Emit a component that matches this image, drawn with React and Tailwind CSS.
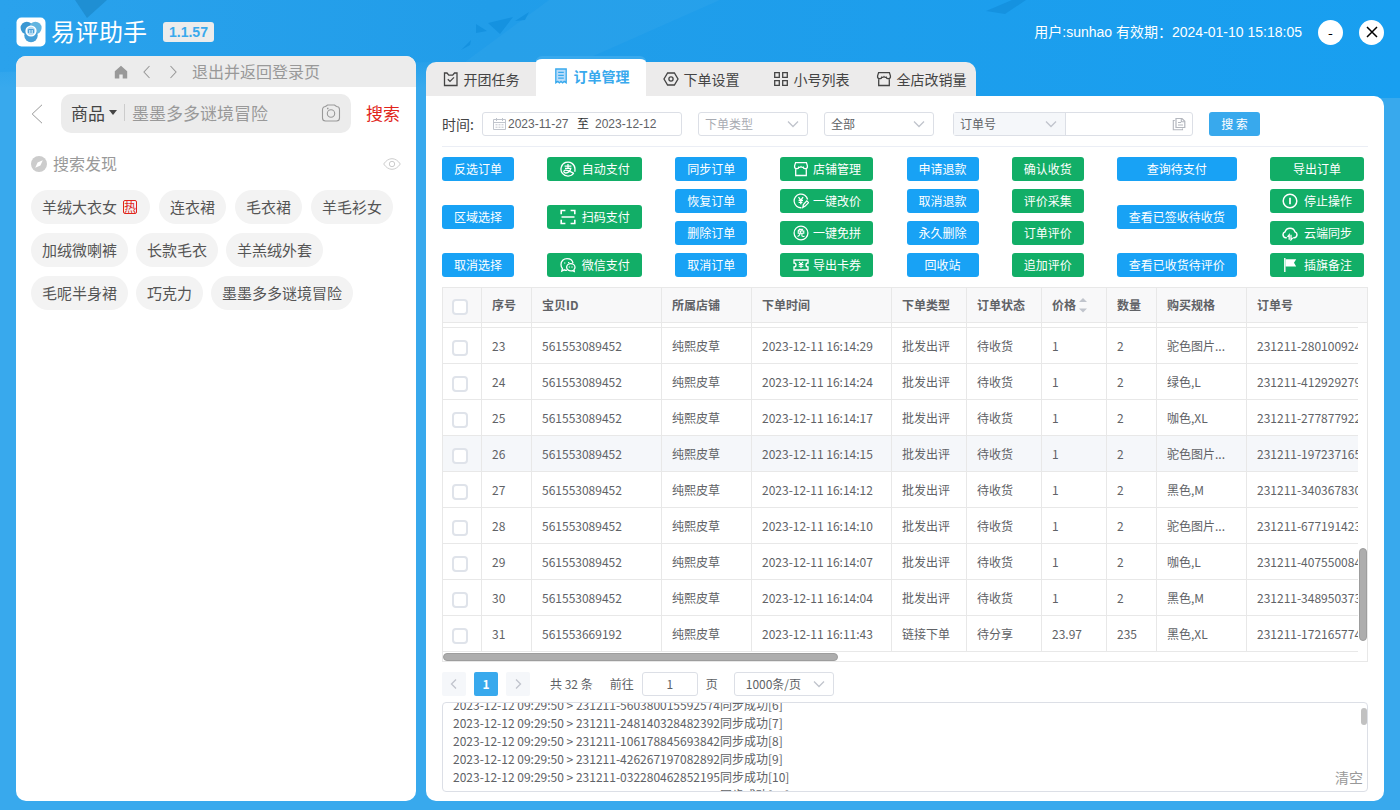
import React from "react";

const SANS = "font-['Noto_Sans_CJK_SC',sans-serif]";
const ARIAL = "font-['Liberation_Sans','Noto_Sans_CJK_SC',sans-serif]";

function Svg({ className = "size-4", children, box = "0 0 16 16" }) {
  return (
    <svg
      viewBox={box}
      className={`shrink-0 ${className}`}
      fill="none"
      stroke="currentColor"
      strokeWidth="1.3"
      aria-hidden="true"
    >
      {children}
    </svg>
  );
}

const icons = {
  task: (
    <>
      <path d="M1.500 2v12.500h12.500V2H11.500L9.700 4.200H5.800L4 2z" />
      <path d="M4.800 8.200l2.200 2.200 4-4" />
    </>
  ),
  order: (
    <>
      <path d="M2.800 1h10.400v13.800l-2-1.400-1.600 1.400L8 13.400l-1.600 1.400-1.600-1.400-2 1.400z" fill="#b9dcfa" />
      <path d="M5.200 4.400h5.600M5.200 7.300h5.600M5.200 10.200h5.600" />
    </>
  ),
  hex: (
    <>
      <path d="M4.600 2h6.800L15 8l-3.600 6H4.600L1 8z" />
      <circle cx="8" cy="8" r="2.100" />
    </>
  ),
  grid: (
    <path d="M1.700 1.700h4.600v4.600H1.700zM9.700 1.700h4.600v4.600H9.700zM1.700 9.700h4.600v4.600H1.700zM9.700 9.700h4.600v4.600H9.700z" />
  ),
  shop: (
    <path d="M2.700 7v7.500h10.600V7M2.600 1.600h10.800l1 3.200v1.400a2 2 0 0 1-2.100 1.400 2 2 0 0 1-2.100-1.400A2 2 0 0 1 8 5.600a2 2 0 0 1-2.200.6 2 2 0 0 1-2.100 1.400 2 2 0 0 1-2.100-1.400V4.800z" />
  ),
  alipay: (
    <>
      <path d="M13.800 12A7 7 0 1 1 15 8c0 1 0 1.800-.3 2.800" />
      <path d="M4.600 5.200h6.800M8 3v4.400M5 7.400h5.800c-.6 2.600-2.800 4.600-5 4.600-2.600 0-2.600-2.800-.2-2.800 2.200 0 5 1.600 8 3" />
    </>
  ),
  scan: (
    <path d="M1.200 5.200V1.500h4.200M10.600 1.500h4.200v3.700M1.200 10.800v3.700h4.200M10.600 14.500h4.200v-3.700M1.500 8h13" strokeWidth="1.600" />
  ),
  wechat: (
    <>
      <path d="M7 13.200c-1 .2-2 0-2.800-.4L1.800 14l.6-2.600A6 6 0 0 1 1 7.400C1 4 3.600 1.600 7 1.600c3.200 0 5.600 1.800 6 4.600" />
      <path d="M10.800 6.600c2.400 0 4.200 1.600 4.200 3.600 0 1-.4 1.800-1 2.400l.3 1.800-1.800-.8c-3.400.8-5.900-1-5.900-3.400 0-2 1.800-3.600 4.200-3.600z" />
      <path d="M4.700 5.600v1M8.700 4.900v1M9.400 9.500v.9M12 9.500v.9" />
    </>
  ),
  price: (
    <>
      <path d="M8.500 14.700A6.800 6.800 0 1 1 14.600 6.500M9.800 14.500l.6-3 3.400-3.600 1.700 1.700-3.300 3.500z" />
      <path d="M5.500 4.200l2.300 2.900 2.300-2.900M5.600 7.400h4.400M5.600 9.300h3.800M7.800 7.200v4" />
    </>
  ),
  free: (
    <>
      <circle cx="8" cy="8" r="6.900" />
      <path d="M7.200 3.600L5 5.800M6.800 4.400h2.700L8.600 5.900M5.200 6h5.600v2.300H5.200zM7.500 6.200c0 3-.9 4.500-3 5.300M8.900 8.400v2.200c0 .8.300.9 2.600.8" strokeWidth="1.100" />
    </>
  ),
  coupon: (
    <>
      <path d="M1 3h14v3a2 2 0 0 0 0 4v3H1v-3a2 2 0 0 0 0-4z" />
      <path d="M6 4.800l2 2.200 2-2.200M5.700 7.500h4.600M5.700 9.300h4.600M8 7.200v3.800" strokeWidth="1.100" />
    </>
  ),
  stop: (
    <>
      <circle cx="8" cy="8" r="6.800" strokeWidth="1.500" />
      <path d="M8 4.800v6.400" strokeWidth="1.700" />
    </>
  ),
  cloud: (
    <>
      <path d="M4.800 12.700H3.800A3 3 0 0 1 3 6.900 5.200 5.200 0 0 1 13 6.900a3 3 0 0 1-.8 5.800H11.200" strokeWidth="1.500" />
      <path d="M7.200 14.800V9.800l-1.700 2M9 9.800v5l1.700-2" />
    </>
  ),
  flag: (
    <>
      <path d="M2.800 1v14" strokeWidth="1.400" />
      <path d="M3.500 2.200h10.700l-2.200 3.500 2.200 3.800H3.500z" fill="currentColor" stroke="none" />
    </>
  ),
};

function Backdrop() {
  return (
    <svg
      className="absolute inset-x-0 top-0 h-[98px] w-full"
      viewBox="0 0 1400 98"
      preserveAspectRatio="none"
      aria-hidden="true"
    >
      <defs>
        <linearGradient id="sky" x1="0" x2="1" y1="0" y2="0">
          <stop offset="0" stopColor="#2aa2ec" />
          <stop offset="0.35" stopColor="#219de9" />
          <stop offset="1" stopColor="#189ff0" />
        </linearGradient>
        <linearGradient id="fade" x1="0" x2="0" y1="0" y2="1">
          <stop offset="0" stopColor="#38a9ed" stopOpacity="0.2" />
          <stop offset="0.7" stopColor="#38a9ed" />
        </linearGradient>
      </defs>
      <path d="M0 0h1400v98H0z" fill="url(#sky)" />
      <path d="M0 72L430 62v36H0z" fill="url(#fade)" />
      <path d="M549 0L465 62h115L720 0z" fill="#fff" fillOpacity="0.03" />
      <path d="M75 0h32L87 18z" fill="#1f8fd3" />
      <path d="M488 23l25-6-13 17zM476 24l11 7-11 2zM529 12l-4 8-10 1zM471 40l-10 10 9-5zM986 11l26-11h14l-21 14z" fill="#1592e0" />
    </svg>
  );
}

function Logo() {
  return (
    <svg viewBox="0 0 30 30" className="size-[30px]" aria-hidden="true">
      <rect x="0.500" y="0.500" width="29" height="29" rx="5" fill="#fff" />
      <circle cx="10.800" cy="11" r="6.200" fill="#3a97d2" />
      <circle cx="19.400" cy="11" r="6.200" fill="#62b5e0" />
      <circle cx="15" cy="18.500" r="6.700" fill="#459fd8" />
      <circle cx="15" cy="14" r="5.600" fill="#fff" />
      <circle cx="15" cy="14" r="4.200" fill="#b5dbf2" />
      <path d="M12.500 16v-3.500h5V16M15 12.500V16" stroke="#4b9fd8" strokeWidth="1" fill="none" />
    </svg>
  );
}

function Header() {
  return (
    <header className="relative flex h-[56px] items-center px-4 pt-2 text-white">
      <Logo />
      <h1 className="ml-[5px] pb-0.5 text-2xl leading-8">易评助手</h1>
      <span className={`ml-4 rounded-[3px] bg-[#ececec] px-1.5 text-sm leading-5 font-bold text-[#38a9ed] ${ARIAL}`}>
        1.1.57
      </span>
      <p className={`ml-auto text-sm ${ARIAL}`}>用户:sunhao 有效期：2024-01-10 15:18:05</p>
      <button type="button" aria-label="最小化" className="ml-4 flex size-[25px] items-center justify-center rounded-full bg-white text-sm text-black">
        -
      </button>
      <button type="button" aria-label="关闭" className="ml-4 flex size-[25px] items-center justify-center rounded-full bg-white text-black">
        <Svg className="size-3" box="0 0 12 12">
          <path d="M1 1l10 10M11 1L1 11" strokeWidth="1.500" />
        </Svg>
      </button>
    </header>
  );
}

const tagRows = [
  ["羊绒大衣女", "连衣裙", "毛衣裙", "羊毛衫女"],
  ["加绒微喇裤", "长款毛衣", "羊羔绒外套"],
  ["毛呢半身裙", "巧克力", "墨墨多多谜境冒险"],
];

function Sidebar() {
  return (
    <aside className="w-[400px] shrink-0 overflow-hidden rounded-[10px] bg-white">
      <nav className="flex h-[31px] items-center bg-[#ececec] pl-[98px] text-base text-[#999]">
        <button type="button" aria-label="主页" className="mr-3">
          <svg viewBox="0 0 14 14" className="size-3.5" fill="#999" aria-hidden="true">
            <path d="M7 .8L.8 6.300V13.500h4.500V9.500h3.400v4h4.500V6.300z" />
          </svg>
        </button>
        <button type="button" aria-label="后退" className="mr-3">
          <Svg className="size-3.5" box="0 0 14 14"><path d="M9.500 1L4 7l5.500 6" strokeWidth="1.100" /></Svg>
        </button>
        <button type="button" aria-label="前进" className="mr-3">
          <Svg className="size-3.5" box="0 0 14 14"><path d="M4.500 1L10 7l-5.500 6" strokeWidth="1.100" /></Svg>
        </button>
        <a href="#login" className="pb-0.5">退出并返回登录页</a>
      </nav>
      <form className="flex items-center pt-[7px] pr-4 pl-[15px]">
        <button type="button" aria-label="返回" className="text-[#999]">
          <Svg className="h-5 w-3" box="0 0 12 20"><path d="M11 .8L1.200 10l9.800 9.200" strokeWidth="1" /></Svg>
        </button>
        <div className="ml-[18px] flex h-[39px] flex-1 items-center rounded-[10px] bg-[#ececec] px-[10px] pb-0.5 text-[17px]">
          <button type="button" className="flex items-center gap-1 text-[#444]">
            商品
            <svg viewBox="0 0 8 5" className="h-[5px] w-2" fill="#444" aria-hidden="true"><path d="M0 0h8L4 5z" /></svg>
          </button>
          <span className="mx-[7px] h-[17px] w-px bg-[#ccc]" />
          <input aria-label="搜索商品" placeholder="墨墨多多谜境冒险" className="min-w-0 flex-1 bg-transparent outline-none placeholder:text-[#999]" />
          <button type="button" aria-label="拍照搜索" className="text-[#999]">
            <Svg className="h-[18px] w-5" box="0 0 20 18">
              <path d="M4.500 2.500L6.500 1h7l2 1.500a3 3 0 0 1 3 3v8.500A3 3 0 0 1 15.500 17h-11a3 3 0 0 1-3-3V5.500a3 3 0 0 1 3-3z" strokeWidth="1.100" />
              <circle cx="10" cy="9.500" r="3.700" strokeWidth="1.100" />
              <path d="M6 4.500h1.500" />
            </Svg>
          </button>
        </div>
        <button type="submit" className="ml-[15px] pb-0.5 text-[17px] text-[#e1251b]">搜索</button>
      </form>
      <section className="px-[15px] pt-[19px]">
        <div className="flex items-center">
          <svg viewBox="0 0 16 16" className="size-4" aria-hidden="true">
            <circle cx="8" cy="8" r="8" fill="#ccc" />
            <path d="M11.800 4.200L9.400 9.400 4.200 11.800 6.600 6.600z" fill="#fff" />
          </svg>
          <h2 className="ml-1.5 flex-1 pb-0.5 text-base leading-[22px] text-[#999]">搜索发现</h2>
          <button type="button" aria-label="显示" className="text-[#ccc]">
            <Svg className="h-3 w-[18px]" box="0 0 18 12">
              <path d="M.7 6C3 2.500 6 .7 9 .7S15 2.500 17.300 6C15 9.500 12 11.300 9 11.300S3 9.500.7 6z" strokeWidth="1" />
              <circle cx="9" cy="6" r="2.700" strokeWidth="1" />
            </Svg>
          </button>
        </div>
        <div className="mt-[14px] flex flex-col gap-[9px] text-[15px] text-[#555]">
          {tagRows.map((row, r) => (
            <div key={r} className={r === 0 ? "flex gap-[9px]" : "flex gap-2"}>
              {row.map((t, i) => (
                <button key={t} type="button" className="flex h-[34px] items-center rounded-full bg-[#f3f3f3] px-[11px]">
                  {t}
                  {r === 0 && i === 0 && (
                    <span className="mr-0.5 ml-1.5 flex size-[14px] items-center justify-center rounded-[2px] border border-[#e1251b] text-xs leading-none text-[#e1251b]">热</span>
                  )}
                </button>
              ))}
            </div>
          ))}
        </div>
      </section>
    </aside>
  );
}

const tabs = [
  ["开团任务", "task"],
  ["订单管理", "order"],
  ["下单设置", "hex"],
  ["小号列表", "grid"],
  ["全店改销量", "shop"],
];

function Tabs() {
  return (
    <div role="tablist" className="flex items-end text-sm">
      {tabs.map(([label, icon], i) => {
        const active = i === 1;
        const tone = active
          ? "h-10 rounded-t-[6px] border-t-[3px] border-[#38a9ed] bg-white pb-[3px] font-bold text-[#38a9ed]"
          : "h-[34px] bg-[#ecebeb] text-[#444]";
        const edge = i === 0 ? "rounded-tl-[10px]" : i === 4 ? "rounded-tr-[10px]" : "";
        return (
          <button key={label} type="button" role="tab" aria-selected={active} className={`flex w-[110px] items-center justify-center gap-[5px] ${tone} ${edge}`}>
            <Svg>{icons[icon]}</Svg>
            {label}
          </button>
        );
      })}
    </div>
  );
}

function Dropdown({ label, value, className, tone = "text-[#606266]" }) {
  return (
    <div className={`relative ${className}`}>
      <select aria-label={label} className={`h-full w-full appearance-none bg-transparent pr-6 pl-1.5 text-xs outline-none ${tone}`}>
        <option>{value}</option>
      </select>
      <Svg className="pointer-events-none absolute top-[7px] right-2 h-2 w-3 text-[#c0c4cc]" box="0 0 12 8">
        <path d="M1 1.500l5 5 5-5" />
      </Svg>
    </div>
  );
}

function Filters() {
  return (
    <form className="flex items-center border-b border-[#ebeef5] pb-[10px] text-xs">
      <label htmlFor="from" className="w-10 text-sm leading-6 text-[#444]">时间:</label>
      <div className={`flex h-6 w-[200px] items-center rounded-[3px] border border-[#dcdfe6] pl-[10px] text-[#606266] ${ARIAL}`}>
        <Svg className="h-3 w-[13px] text-[#c0c4cc]" box="0 0 13 12">
          <path d="M.5 1.500h12v10H.5zM.5 4.500h12M3.500 0v3M9.500 0v3" strokeWidth="1" />
          <path d="M2.500 6.800h8M2.500 9.200h8" strokeWidth="1" strokeDasharray="2 1" />
        </Svg>
        <input id="from" defaultValue="2023-11-27" className="ml-0.5 w-[63px] outline-none" />
        <span className="mx-1.5 text-[#303133]">至</span>
        <input aria-label="结束日期" defaultValue="2023-12-12" className="w-[70px] outline-none" />
      </div>
      <Dropdown label="下单类型" value="下单类型" tone="text-[#a8abb2]" className="ml-4 h-6 w-[110px] rounded-[3px] border border-[#dcdfe6]" />
      <Dropdown label="状态" value="全部" className="ml-4 h-6 w-[110px] rounded-[3px] border border-[#dcdfe6]" />
      <div className="ml-[19px] flex h-6 w-[240px] rounded-[3px] border border-[#dcdfe6]">
        <Dropdown label="查询字段" value="订单号" className="w-[112px] border-r border-[#dcdfe6] bg-[#f5f7fa]" />
        <input aria-label="查询内容" className="min-w-0 flex-1 px-2 outline-none" />
        <button type="button" aria-label="粘贴" className="mr-1.5 text-[#b4b7be]">
          <Svg className="size-[14px]" box="0 0 14 14">
            <path d="M4 1.500h6l2.800 2.800V10.500H4zM6 5.500h3M6 8h5" strokeWidth="1.200" />
            <path d="M9.300 1.500V4.800H12.800M2.800 3.500H1.300V12.700H10.500V11.500" strokeWidth="1.100" />
          </Svg>
        </button>
      </div>
      <button type="submit" className="ml-4 h-6 w-[51px] rounded-[3px] bg-[#38a9ed] text-white">搜 索</button>
    </form>
  );
}

const actionColumns = [
  ["w-[72px]", "blue", [["反选订单"], ["区域选择"], ["取消选择"]]],
  ["w-[95px]", "green", [["自动支付", "alipay"], ["扫码支付", "scan"], ["微信支付", "wechat"]]],
  ["w-[72px]", "blue", [["同步订单"], ["恢复订单"], ["删除订单"], ["取消订单"]]],
  ["w-[93px]", "green", [["店铺管理", "shop"], ["一键改价", "price"], ["一键免拼", "free"], ["导出卡券", "coupon"]]],
  ["w-[72px]", "blue", [["申请退款"], ["取消退款"], ["永久删除"], ["回收站"]]],
  ["w-[72px]", "green", [["确认收货"], ["评价采集"], ["订单评价"], ["追加评价"]]],
  ["w-[120px]", "blue", [["查询待支付"], ["查看已签收待收货"], ["查看已收货待评价"]]],
  ["w-[94px]", "green", [["导出订单"], ["停止操作", "stop"], ["云端同步", "cloud"], ["插旗备注", "flag"]]],
];

function Actions() {
  return (
    <div className="flex justify-between pt-[10px] pr-1 pb-[10px]">
      {actionColumns.map(([width, color, items], c) => (
        <div key={c} className={`flex min-h-[120px] flex-col justify-between gap-2 ${width}`}>
          {items.map(([label, icon]) => (
            <button
              key={label}
              type="button"
              className={`flex h-6 items-center justify-center rounded-[3px] text-xs text-white ${c === 3 ? "gap-1" : "gap-1.5"} ${color === "blue" ? "bg-[#18a2f5]" : "bg-[#12ae67]"}`}
            >
              {icon && <Svg>{icons[icon]}</Svg>}
              {label}
            </button>
          ))}
        </div>
      ))}
    </div>
  );
}

const headers = ["序号", "宝贝ID", "所属店铺", "下单时间", "下单类型", "订单状态", "价格", "数量", "购买规格", "订单号"];

const rows = [
  ["23", "561553089452", "纯熙皮草", "2023-12-11 16:14:29", "批发出评", "待收货", "1", "2", "驼色图片...", "231211-280100924"],
  ["24", "561553089452", "纯熙皮草", "2023-12-11 16:14:24", "批发出评", "待收货", "1", "2", "绿色,L", "231211-412929279"],
  ["25", "561553089452", "纯熙皮草", "2023-12-11 16:14:17", "批发出评", "待收货", "1", "2", "咖色,XL", "231211-277877922"],
  ["26", "561553089452", "纯熙皮草", "2023-12-11 16:14:15", "批发出评", "待收货", "1", "2", "驼色图片...", "231211-197237165"],
  ["27", "561553089452", "纯熙皮草", "2023-12-11 16:14:12", "批发出评", "待收货", "1", "2", "黑色,M", "231211-340367830"],
  ["28", "561553089452", "纯熙皮草", "2023-12-11 16:14:10", "批发出评", "待收货", "1", "2", "驼色图片...", "231211-677191423"],
  ["29", "561553089452", "纯熙皮草", "2023-12-11 16:14:07", "批发出评", "待收货", "1", "2", "咖色,L", "231211-407550084"],
  ["30", "561553089452", "纯熙皮草", "2023-12-11 16:14:04", "批发出评", "待收货", "1", "2", "黑色,M", "231211-348950373"],
  ["31", "561553669192", "纯熙皮草", "2023-12-11 16:11:43", "链接下单", "待分享", "23.97", "235", "黑色,XL", "231211-172165774"],
];

function Columns() {
  return (
    <colgroup>
      <col className="w-[39px]" />
      <col className="w-[50px]" />
      <col className="w-[130px]" />
      <col className="w-[90px]" />
      <col className="w-[140px]" />
      <col className="w-[75px]" />
      <col className="w-[75px]" />
      <col className="w-[65px]" />
      <col className="w-[50px]" />
      <col className="w-[90px]" />
      <col />
    </colgroup>
  );
}

function Check({ label }) {
  return (
    <input
      type="checkbox"
      aria-label={label}
      className="block size-4 appearance-none rounded-[4px] border-2 border-[#dfe3ea] bg-white checked:bg-[#38a9ed]"
    />
  );
}

const TABLE = "w-full table-fixed border-separate border-spacing-0 text-left text-xs text-[#606266]";
const LINE = "border-b border-r border-[#e8e8e8]";

function OrderTable() {
  return (
    <div className="relative border border-[#e8e8e8] pb-[9px]">
      <table className={TABLE}>
        <Columns />
        <thead>
          <tr className="h-[35px] bg-[#f8f8f9]">
            <th className={`px-[9px] pt-1 ${LINE}`}><Check label="全选" /></th>
            {headers.map((h, i) => (
              <th key={h} className={`px-[10px] font-bold whitespace-nowrap border-[#e8e8e8] border-b ${i < 9 ? "border-r" : ""}`}>
                {h === "价格" ? (
                  <span className="flex items-center gap-[3px]">
                    {h}
                    <svg viewBox="0 0 8 16" className="h-4 w-2" fill="#c0c4cc" aria-hidden="true"><path d="M0 5h8L4 1zM0 11.500h8L4 15.500z" /></svg>
                  </span>
                ) : h}
              </th>
            ))}
          </tr>
        </thead>
      </table>
      <div className="mr-[9px] overflow-hidden">
        <table className={TABLE}>
          <Columns />
          <tbody>
            <tr aria-hidden="true" className="h-[5px]">
              {["check", ...headers].map((h, i) => (
                <td key={h} className={`p-0 border-b border-[#e8e8e8] ${i < 10 ? "border-r" : ""}`} />
              ))}
            </tr>
            {rows.map((row) => (
              <tr key={row[0]} className={`h-9 ${row[0] === "26" ? "bg-[#f5f7fa]" : ""}`}>
                <td className={`px-[9px] pt-1 pb-0 ${LINE}`}><Check label={`选择 ${row[0]}`} /></td>
                {row.map((v, i) => (
                  <td key={i} className={`px-[10px] py-0 whitespace-nowrap border-b border-[#e8e8e8] ${i < 9 ? "border-r" : ""}`}>{v}</td>
                ))}
              </tr>
            ))}
          </tbody>
        </table>
      </div>
      <div className="absolute right-0 bottom-5 h-[93px] w-2 rounded-full border border-[#9d9d9d] bg-[#adadad]" />
      <div className="absolute bottom-0 left-0 h-2 w-[395px] rounded-full border border-[#9d9d9d] bg-[#adadad]" />
    </div>
  );
}

function Pager() {
  return (
    <nav aria-label="分页" className="mt-[10px] flex h-6 items-center text-xs text-[#606266]">
      <button type="button" aria-label="上一页" className="flex size-6 items-center justify-center rounded-[2px] bg-[#f5f7fa] text-[#c0c4cc]">
        <Svg className="size-3" box="0 0 12 12"><path d="M8 1.500L3.500 6 8 10.500" /></Svg>
      </button>
      <button type="button" className="ml-2 size-6 rounded-[2px] bg-[#38a9ed] font-bold text-white">1</button>
      <button type="button" aria-label="下一页" className="ml-2 flex size-6 items-center justify-center rounded-[2px] bg-[#f5f7fa] text-[#c0c4cc]">
        <Svg className="size-3" box="0 0 12 12"><path d="M4 1.500L8.500 6 4 10.500" /></Svg>
      </button>
      <span className="ml-5">共 32 条</span>
      <label htmlFor="page" className="ml-[17px]">前往</label>
      <input id="page" defaultValue="1" className="mx-2 h-6 w-14 rounded-[3px] border border-[#dcdfe6] pb-0.5 text-center outline-none" />
      <span>页</span>
      <Dropdown label="每页条数" value="1000条/页" className="ml-4 h-6 w-[100px] rounded-[3px] border border-[#dcdfe6] pl-[5px]" />
    </nav>
  );
}

const logs = [
  ["231211-560380015592574", 6],
  ["231211-248140328482392", 7],
  ["231211-106178845693842", 8],
  ["231211-426267197082892", 9],
  ["231211-032280462852195", 10],
  ["231211-863960776003474", 11],
];

function LogBox() {
  return (
    <div role="log" className="relative mt-1.5 h-[90px] overflow-hidden rounded-[4px] border border-[#dcdfe6] px-[10px] text-xs text-[#606266]">
      <div className="-mt-[7px]">
        {logs.map(([id, n]) => (
          <p key={n} className="leading-[18px]">{`2023-12-12 09:29:50 > ${id}同步成功[${n}]`}</p>
        ))}
      </div>
      <div className="absolute top-[5px] right-0 h-[17px] w-1.5 rounded-[3px] bg-[#c1c1c1]" />
      <button type="button" className="absolute right-1 bottom-1 text-sm text-[#999]">清空</button>
    </div>
  );
}

export default function App() {
  return (
    <div className={`relative flex min-h-screen flex-col bg-[#38a9ed] pb-[9px] ${SANS}`}>
      <Backdrop />
      <Header />
      <div className="relative flex flex-1 gap-[10px] px-4">
        <Sidebar />
        <main className="flex min-w-0 flex-1 flex-col">
          <Tabs />
          <div className="flex-1 rounded-[10px] rounded-tl-none bg-white px-4 pt-4 pb-[9px]">
            <Filters />
            <Actions />
            <OrderTable />
            <Pager />
            <LogBox />
          </div>
        </main>
      </div>
    </div>
  );
}
